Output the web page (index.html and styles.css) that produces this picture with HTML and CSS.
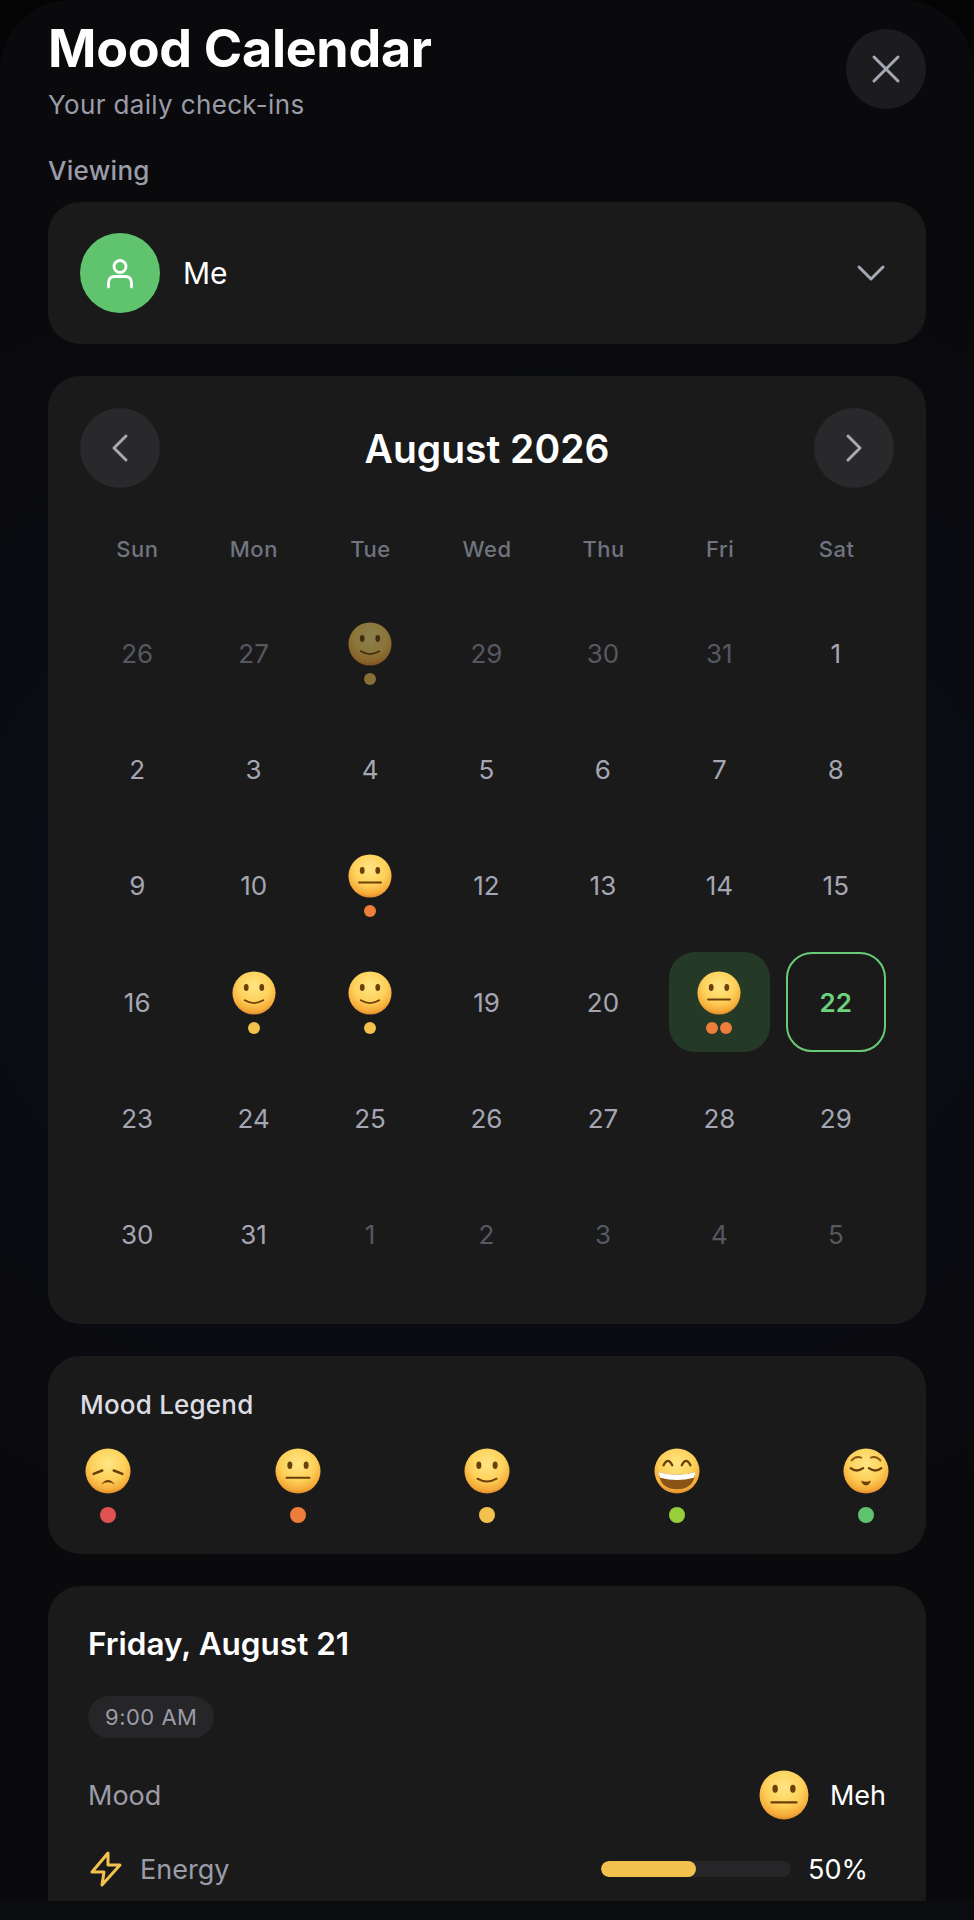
FILE: index.html
```html
<!DOCTYPE html>
<html lang="en">
<head>
    <meta charset="UTF-8">
    <meta name="viewport" content="width=device-width, initial-scale=1.0">
    <title>Mood Calendar</title>
    <link rel="stylesheet" href="styles.css">
</head>
<body>
    <svg class="defs" width="0" height="0" aria-hidden="true">
        <defs>
            <radialGradient id="faceFill" cx="50%" cy="34%" r="68%">
                <stop offset="0%" stop-color="#ffe684"/>
                <stop offset="55%" stop-color="#fdd15a"/>
                <stop offset="85%" stop-color="#f6ab38"/>
                <stop offset="100%" stop-color="#d9822b"/>
            </radialGradient>
            <symbol id="face-sad" viewBox="0 0 48 48">
                <circle cx="24" cy="24" r="23.5" fill="url(#faceFill)"/>
                <path d="M9 27 L18 23.5 M39 27 L30 23.5" stroke="#6b3f0a" stroke-width="2.6" stroke-linecap="round" fill="none"/>
                <path d="M17 38 Q24 29 31 38 Q24 33.5 17 38Z" fill="#6b3f0a"/>
            </symbol>
            <symbol id="face-meh" viewBox="0 0 48 48">
                <circle cx="24" cy="24" r="23.5" fill="url(#faceFill)"/>
                <ellipse cx="15.500" cy="18" rx="2.600" ry="3.800" fill="#6b3f0a"/>
                <ellipse cx="32.500" cy="18" rx="2.600" ry="3.800" fill="#6b3f0a"/>
                <rect x="11" y="30" width="26" height="2.200" rx="1" fill="#6b3f0a"/>
            </symbol>
            <symbol id="face-good" viewBox="0 0 48 48">
                <circle cx="24" cy="24" r="23.5" fill="url(#faceFill)"/>
                <ellipse cx="15.500" cy="18" rx="2.600" ry="3.800" fill="#6b3f0a"/>
                <ellipse cx="32.500" cy="18" rx="2.600" ry="3.800" fill="#6b3f0a"/>
                <path d="M14 32 Q24 38 34 32" stroke="#6b3f0a" stroke-width="2" stroke-linecap="round" fill="none"/>
            </symbol>
            <symbol id="face-great" viewBox="0 0 48 48">
                <circle cx="24" cy="24" r="23.5" fill="url(#faceFill)"/>
                <path d="M10 18 Q14.500 9 19 18 M29 18 Q33.500 9 38 18" stroke="#6b3f0a" stroke-width="2.400" stroke-linecap="round" fill="none"/>
                <path d="M5 25 Q24 31 43 25 Q42 43 24 43 Q6 43 5 25Z" fill="#8a5416"/>
                <path d="M5 25 Q24 31 43 25 Q43 29 41.500 31 Q24 36 6.500 31 Q5 29 5 25Z" fill="#fff"/>
            </symbol>
            <symbol id="face-calm" viewBox="0 0 48 48">
                <circle cx="24" cy="24" r="23.5" fill="url(#faceFill)"/>
                <path d="M8 21 Q14 26 21 21 M27 21 Q34 26 40 21" stroke="#6b3f0a" stroke-width="2.400" stroke-linecap="round" fill="none"/>
                <path d="M9 13 Q13 8 19 10 M29 10 Q35 8 39 13" stroke="#8a5416" stroke-width="2" stroke-linecap="round" fill="none"/>
                <path d="M19 34 Q24 36.500 29 34 Q28 39 24 39 Q20 39 19 34Z" fill="#6b3f0a"/>
            </symbol>
        </defs>
    </svg>

    <div class="sheet">
        <header class="header">
            <div>
                <h1>Mood Calendar</h1>
                <p class="subtitle">Your daily check-ins</p>
            </div>
            <button class="close-btn" aria-label="Close">
                <svg width="36" height="36" viewBox="0 0 36 36" fill="none" stroke="#a6a9b4" stroke-width="3" stroke-linecap="round"><path d="M6 6 L30 30 M30 6 L6 30"/></svg>
            </button>
        </header>

        <div class="viewing-label">Viewing</div>
        <section class="card picker">
            <span class="avatar">
                <svg width="36" height="36" viewBox="0 0 36 36" fill="none" stroke="#fff" stroke-width="2.800" stroke-linecap="round"><circle cx="18" cy="11.500" r="6"/><path d="M6.500 32 V28 Q6.500 21.500 13 21.500 H23 Q29.500 21.500 29.500 28 V32"/></svg>
            </span>
            <span class="picker-name">Me</span>
            <svg class="chevron" width="30" height="20" viewBox="0 0 30 20" fill="none" stroke="#a6a9b4" stroke-width="3" stroke-linecap="round" stroke-linejoin="round"><path d="M3 4 L15 16 L27 4"/></svg>
        </section>

        <section class="card calendar">
            <div class="cal-head">
                <button class="nav-btn" aria-label="Previous month">
                    <svg width="20" height="32" viewBox="0 0 20 32" fill="none" stroke="#a6a9b4" stroke-width="3" stroke-linecap="round" stroke-linejoin="round"><path d="M16 4 L4 16 L16 28"/></svg>
                </button>
                <h2>August 2026</h2>
                <button class="nav-btn" aria-label="Next month">
                    <svg width="20" height="32" viewBox="0 0 20 32" fill="none" stroke="#a6a9b4" stroke-width="3" stroke-linecap="round" stroke-linejoin="round"><path d="M4 4 L16 16 L4 28"/></svg>
                </button>
            </div>

            <div class="weekdays">
                <span>Sun</span><span>Mon</span><span>Tue</span><span>Wed</span><span>Thu</span><span>Fri</span><span>Sat</span>
            </div>

            <div class="days">
                <div class="day muted">26</div>
                <div class="day muted">27</div>
                <div class="day faded"><svg class="face"><use href="#face-good"/></svg><span class="dots"><i class="dot good"></i></span></div>
                <div class="day muted">29</div>
                <div class="day muted">30</div>
                <div class="day muted">31</div>
                <div class="day">1</div>

                <div class="day">2</div>
                <div class="day">3</div>
                <div class="day">4</div>
                <div class="day">5</div>
                <div class="day">6</div>
                <div class="day">7</div>
                <div class="day">8</div>

                <div class="day">9</div>
                <div class="day">10</div>
                <div class="day"><svg class="face"><use href="#face-meh"/></svg><span class="dots"><i class="dot meh"></i></span></div>
                <div class="day">12</div>
                <div class="day">13</div>
                <div class="day">14</div>
                <div class="day">15</div>

                <div class="day">16</div>
                <div class="day"><svg class="face"><use href="#face-good"/></svg><span class="dots"><i class="dot good"></i></span></div>
                <div class="day"><svg class="face"><use href="#face-good"/></svg><span class="dots"><i class="dot good"></i></span></div>
                <div class="day">19</div>
                <div class="day">20</div>
                <div class="day selected"><svg class="face"><use href="#face-meh"/></svg><span class="dots"><i class="dot meh"></i><i class="dot meh"></i></span></div>
                <div class="day today">22</div>

                <div class="day">23</div>
                <div class="day">24</div>
                <div class="day">25</div>
                <div class="day">26</div>
                <div class="day">27</div>
                <div class="day">28</div>
                <div class="day">29</div>

                <div class="day">30</div>
                <div class="day">31</div>
                <div class="day muted">1</div>
                <div class="day muted">2</div>
                <div class="day muted">3</div>
                <div class="day muted">4</div>
                <div class="day muted">5</div>
            </div>
        </section>

        <section class="card legend">
            <h3>Mood Legend</h3>
            <div class="legend-row">
                <div class="legend-item"><svg class="legend-face"><use href="#face-sad"/></svg><i class="legend-dot bad"></i></div>
                <div class="legend-item"><svg class="legend-face"><use href="#face-meh"/></svg><i class="legend-dot meh"></i></div>
                <div class="legend-item"><svg class="legend-face"><use href="#face-good"/></svg><i class="legend-dot good"></i></div>
                <div class="legend-item"><svg class="legend-face"><use href="#face-great"/></svg><i class="legend-dot great"></i></div>
                <div class="legend-item"><svg class="legend-face"><use href="#face-calm"/></svg><i class="legend-dot calm"></i></div>
            </div>
        </section>

        <section class="card detail">
            <h3 class="detail-date">Friday, August 21</h3>
            <span class="time-chip">9:00 AM</span>
            <div class="detail-row mood-row">
                <span class="detail-label">Mood</span>
                <span class="mood-value"><svg class="mood-face"><use href="#face-meh"/></svg>Meh</span>
            </div>
            <div class="detail-row energy-row">
                <span class="detail-label energy-label">
                    <svg width="36" height="38" viewBox="0 0 36 38" fill="none" stroke="#f2c14e" stroke-width="3" stroke-linejoin="round" stroke-linecap="round"><path d="M20 3 L4 22 H16 L14 35 L32 15 H20 Z"/></svg>
                    Energy
                </span>
                <span class="energy-value">
                    <span class="bar"><span class="bar-fill" style="width: 50%"></span></span>
                    <span class="percent">50%</span>
                </span>
            </div>
        </section>
    </div>
</body>
</html>
```

FILE: styles.css
```css
* {
    box-sizing: border-box;
}
html, body {
    margin: 0;
    padding: 0;
    height: 1920px;
    overflow: hidden;
}
body {
    font-family: Inter, "Liberation Sans", sans-serif;
    background: linear-gradient(#040405 0, #08090c 200px, #0b0c10 100%);
    color: #ffffff;
}
h1, h2, h3, p {
    margin: 0;
}
i {
    display: block;
}
.defs {
    position: absolute;
}
.sheet {
    height: 1901px;
    overflow: hidden;
    padding: 0 48px;
    border-radius: 72px 72px 0 0;
    background: radial-gradient(ellipse 900px 700px at 50% 900px, #0a1020 0%, #0a0b10 70%, #0a0a0d 100%);
}
.header {
    display: flex;
    justify-content: space-between;
    align-items: flex-start;
    height: 141px;
    padding-top: 19px;
}
h1 {
    font-size: 52px;
    line-height: 60px;
    font-weight: 700;
    letter-spacing: -0.3px;
}
.subtitle {
    margin-top: 10px;
    font-size: 26px;
    line-height: 32px;
    letter-spacing: 0.35px;
    color: #9a9da8;
}
.close-btn {
    width: 80px;
    height: 80px;
    margin-top: 10px;
    padding: 0;
    border: none;
    border-radius: 50%;
    background-color: #1c1c1e;
    display: flex;
    align-items: center;
    justify-content: center;
}
.viewing-label {
    height: 61px;
    padding-top: 14px;
    font-size: 26px;
    line-height: 32px;
    font-weight: 500;
    letter-spacing: 0.3px;
    color: #9a9da8;
}
.card {
    background-color: #1a1a1b;
    border-radius: 32px;
}
.picker {
    height: 142px;
    padding: 0 40px 0 32px;
    display: flex;
    align-items: center;
}
.avatar {
    width: 80px;
    height: 80px;
    border-radius: 50%;
    background-color: #5fc46d;
    display: flex;
    align-items: center;
    justify-content: center;
}
.picker-name {
    margin-left: 23px;
    font-size: 30px;
    font-weight: 400;
    flex: 1;
}
.calendar {
    margin-top: 32px;
    height: 948px;
    padding: 32px 32px 0;
}
.cal-head {
    display: flex;
    justify-content: space-between;
    align-items: center;
    height: 80px;
}
.cal-head h2 {
    font-size: 39px;
    font-weight: 600;
}
.nav-btn {
    width: 80px;
    height: 80px;
    padding: 0;
    border: none;
    border-radius: 50%;
    background-color: #29292b;
    display: flex;
    align-items: center;
    justify-content: center;
}
.weekdays {
    display: grid;
    grid-template-columns: repeat(7, 1fr);
    column-gap: 16px;
    margin-top: 48px;
    padding: 0 7px;
    text-align: center;
    font-size: 22px;
    line-height: 26px;
    font-weight: 500;
    letter-spacing: 0.5px;
    color: #70747f;
}
.days {
    display: grid;
    grid-template-columns: repeat(7, 1fr);
    gap: 16.4px 16px;
    margin-top: 41px;
    padding: 0 8px 0 7px;
}
.day {
    height: 100px;
    border-radius: 26px;
    display: flex;
    flex-direction: column;
    align-items: center;
    justify-content: center;
    font-size: 26px;
    color: #a4a7b2;
}
.day.muted {
    color: #565860;
}
.day.faded {
    opacity: 0.5;
}
.day.selected {
    background-color: #243a26;
}
.day.today {
    border: 2px solid #68cb76;
    color: #6dd07c;
    font-weight: 600;
}
.face {
    width: 44px;
    height: 44px;
}
.dots {
    display: flex;
    gap: 2px;
    margin-top: 7px;
}
.dot {
    width: 12px;
    height: 12px;
    border-radius: 50%;
}
.dot.meh, .legend-dot.meh {
    background-color: #ed7d3a;
}
.dot.good, .legend-dot.good {
    background-color: #f2c14e;
}
.legend-dot.bad {
    background-color: #e05252;
}
.legend-dot.great {
    background-color: #96ce3c;
}
.legend-dot.calm {
    background-color: #5fc46d;
}
.legend {
    margin-top: 32px;
    height: 198px;
    padding: 33px 32px 0;
}
.legend h3 {
    font-size: 26px;
    line-height: 32px;
    font-weight: 500;
    letter-spacing: 0.2px;
    color: #dcdde2;
}
.legend-row {
    display: flex;
    justify-content: space-between;
    margin-top: 27px;
}
.legend-item {
    width: 56px;
    display: flex;
    flex-direction: column;
    align-items: center;
    gap: 13px;
}
.legend-face {
    width: 46px;
    height: 46px;
}
.legend-dot {
    width: 16px;
    height: 16px;
    border-radius: 50%;
}
.detail {
    margin-top: 32px;
    height: 400px;
    padding: 39px 40px;
}
.detail-date {
    font-size: 31.5px;
    line-height: 38px;
    font-weight: 600;
}
.time-chip {
    display: inline-block;
    margin-top: 33px;
    height: 42px;
    padding: 0 17px;
    border-radius: 21px;
    background-color: #262628;
    font-size: 22px;
    line-height: 42px;
    letter-spacing: 0.5px;
    color: #9a9da8;
}
.detail-row {
    display: flex;
    justify-content: space-between;
    align-items: center;
}
.mood-row {
    margin-top: 30px;
    height: 54px;
}
.energy-row {
    margin-top: 27px;
    height: 40px;
}
.detail-label {
    font-size: 27px;
    color: #9a9da8;
}
.energy-label {
    display: flex;
    align-items: center;
    gap: 16px;
}
.mood-value {
    display: flex;
    align-items: center;
    gap: 21px;
    font-size: 27px;
    font-weight: 400;
}
.mood-face {
    width: 50px;
    height: 50px;
}
.energy-value {
    display: flex;
    align-items: center;
    gap: 17px;
}
.bar {
    width: 190px;
    height: 16px;
    border-radius: 8px;
    background-color: #262628;
    overflow: hidden;
}
.bar-fill {
    display: block;
    height: 100%;
    border-radius: 8px;
    background-color: #f2c14e;
}
.percent {
    width: 78px;
    font-size: 27px;
    font-weight: 400;
}
```
